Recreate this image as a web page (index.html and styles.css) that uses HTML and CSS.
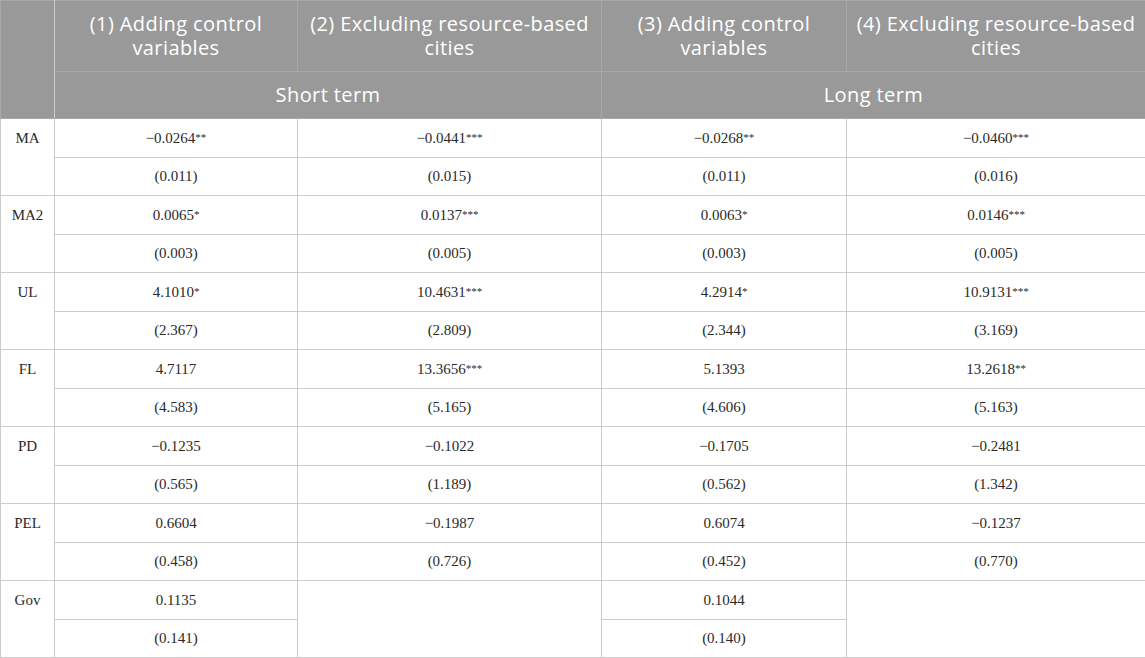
FILE: index.html
```html
<!DOCTYPE html>
<html>
<head>
<meta charset="utf-8">
<link rel="stylesheet" href="styles.css">
</head>
<body>
<table class="results">
  <colgroup>
    <col class="c-var">
    <col class="c1">
    <col class="c2">
    <col class="c3">
    <col class="c4">
  </colgroup>
  <thead>
    <tr class="h1">
      <th rowspan="2" class="blank"></th>
      <th>(1) Adding control<br>variables</th>
      <th>(2) Excluding resource-based<br>cities</th>
      <th>(3) Adding control<br>variables</th>
      <th>(4) Excluding resource-based<br>cities</th>
    </tr>
    <tr class="h2">
      <th colspan="2">Short term</th>
      <th colspan="2">Long term</th>
    </tr>
  </thead>
  <tbody>
    <tr><td rowspan="2" class="var">MA</td><td>−0.0264<sup>**</sup></td><td>−0.0441<sup>***</sup></td><td>−0.0268<sup>**</sup></td><td>−0.0460<sup>***</sup></td></tr>
    <tr><td>(0.011)</td><td>(0.015)</td><td>(0.011)</td><td>(0.016)</td></tr>
    <tr><td rowspan="2" class="var">MA2</td><td>0.0065<sup>*</sup></td><td>0.0137<sup>***</sup></td><td>0.0063<sup>*</sup></td><td>0.0146<sup>***</sup></td></tr>
    <tr><td>(0.003)</td><td>(0.005)</td><td>(0.003)</td><td>(0.005)</td></tr>
    <tr><td rowspan="2" class="var">UL</td><td>4.1010<sup>*</sup></td><td>10.4631<sup>***</sup></td><td>4.2914<sup>*</sup></td><td>10.9131<sup>***</sup></td></tr>
    <tr><td>(2.367)</td><td>(2.809)</td><td>(2.344)</td><td>(3.169)</td></tr>
    <tr><td rowspan="2" class="var">FL</td><td>4.7117</td><td>13.3656<sup>***</sup></td><td>5.1393</td><td>13.2618<sup>**</sup></td></tr>
    <tr><td>(4.583)</td><td>(5.165)</td><td>(4.606)</td><td>(5.163)</td></tr>
    <tr><td rowspan="2" class="var">PD</td><td>−0.1235</td><td>−0.1022</td><td>−0.1705</td><td>−0.2481</td></tr>
    <tr><td>(0.565)</td><td>(1.189)</td><td>(0.562)</td><td>(1.342)</td></tr>
    <tr><td rowspan="2" class="var">PEL</td><td>0.6604</td><td>−0.1987</td><td>0.6074</td><td>−0.1237</td></tr>
    <tr><td>(0.458)</td><td>(0.726)</td><td>(0.452)</td><td>(0.770)</td></tr>
    <tr><td rowspan="2" class="var">Gov</td><td>0.1135</td><td rowspan="2"></td><td>0.1044</td><td rowspan="2"></td></tr>
    <tr><td>(0.141)</td><td>(0.140)</td></tr>
  </tbody>
</table>
</body>
</html>
```

FILE: styles.css
```css
html, body {
  margin: 0;
  padding: 0;
  background: #ffffff;
}

.results {
  border-collapse: collapse;
  table-layout: fixed;
  width: 1145px;
}

.c-var { width: 54px; }
.c1 { width: 243px; }
.c2 { width: 304px; }
.c3 { width: 245px; }
.c4 { width: 299px; }

.results th {
  background: #999999;
  color: #ffffff;
  font-family: "Open Sans", "Lato", sans-serif;
  font-weight: 400;
  font-size: 20px;
  letter-spacing: 0.4px;
  line-height: 24px;
  text-align: center;
  border: 1px solid #a9a9a9;
  padding: 0 2px;
}

.results .h1 th {
  height: 70px;
}

.results .h2 th {
  height: 46px;
}

.results th.blank {
  border-right-color: #cccccc;
}

.results td {
  font-family: "Liberation Serif", "Times New Roman", serif;
  font-size: 15px;
  color: #2a2a2a;
  text-align: center;
  vertical-align: middle;
  border: 1px solid #cccccc;
  height: 37.5px;
  padding: 0 6px;
  line-height: 18px;
}

.results td.var {
  vertical-align: top;
  padding-top: 10px;
}

.results sup {
  font-size: 11px;
  line-height: 0;
  vertical-align: 2px;
}
```
